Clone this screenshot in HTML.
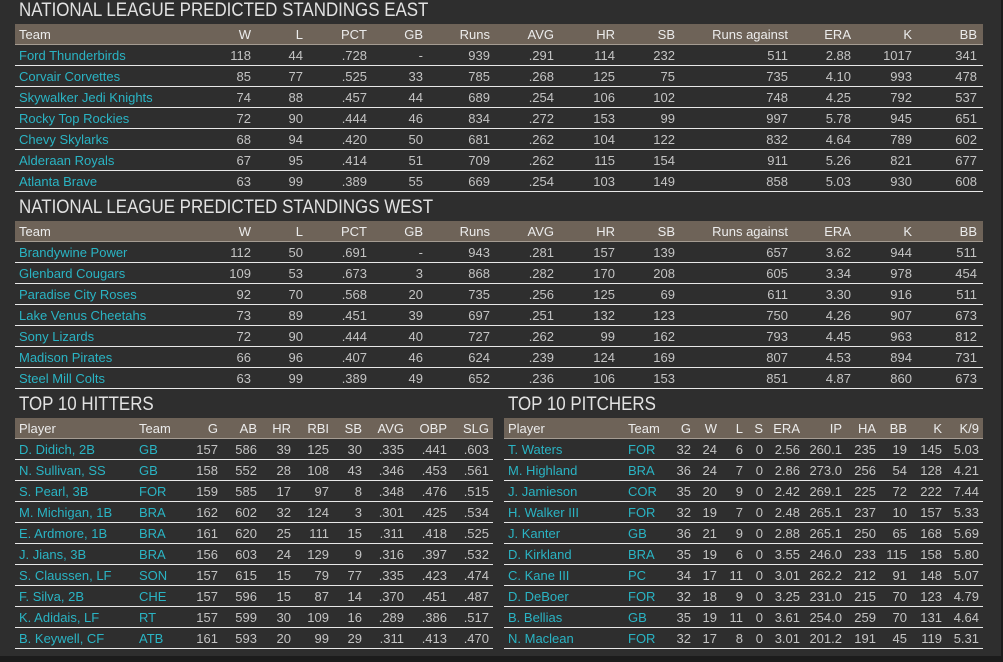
<!DOCTYPE html>
<html><head><meta charset="utf-8"><style>
body{margin:0;width:1003px;height:662px;background:#1c1c1c;font-family:"Liberation Sans",sans-serif;overflow:hidden;position:relative}
.panel{position:absolute;left:0;top:0;width:1001px;height:656px;background:#2e2e2e}
.t{position:absolute;color:#e2e2e2;font-size:19px;font-weight:normal;white-space:nowrap;transform:scaleX(0.89);transform-origin:0 0}
table{position:absolute;border-collapse:collapse;table-layout:fixed;font-size:13px}
td,th{height:20px;padding:0 4px 0 0;text-align:right;color:#c4c4c4;border-bottom:1px solid #e8e8e8;white-space:nowrap;overflow:visible;font-weight:normal}
th{background:#6e6358;color:#ececec;border-bottom:1px solid #a59c92}
td.n,th.n{text-align:left;padding-left:4px}
td.n{color:#2ab4c4}
td.c{color:#2ab4c4;text-align:left;padding-left:4px}
th.c{text-align:left;padding-left:4px}
</style></head><body><div class="panel"></div>
<div class="t" style="left:19px;top:0px">NATIONAL LEAGUE PREDICTED STANDINGS EAST</div>
<table style="left:15px;top:24px;width:968px">
<colgroup><col style="width:200px"><col style="width:40px"><col style="width:52px"><col style="width:64px"><col style="width:56px"><col style="width:67px"><col style="width:64px"><col style="width:61px"><col style="width:60px"><col style="width:113px"><col style="width:63px"><col style="width:61px"><col style="width:67px"></colgroup>
<tr><th class="n">Team</th><th>W</th><th>L</th><th>PCT</th><th>GB</th><th>Runs</th><th>AVG</th><th>HR</th><th>SB</th><th>Runs against</th><th>ERA</th><th>K</th><th style="padding-right:6px">BB</th></tr>
<tr><td class="n">Ford Thunderbirds</td><td>118</td><td>44</td><td>.728</td><td>-</td><td>939</td><td>.291</td><td>114</td><td>232</td><td>511</td><td>2.88</td><td>1017</td><td style="padding-right:6px">341</td></tr>
<tr><td class="n">Corvair Corvettes</td><td>85</td><td>77</td><td>.525</td><td>33</td><td>785</td><td>.268</td><td>125</td><td>75</td><td>735</td><td>4.10</td><td>993</td><td style="padding-right:6px">478</td></tr>
<tr><td class="n">Skywalker Jedi Knights</td><td>74</td><td>88</td><td>.457</td><td>44</td><td>689</td><td>.254</td><td>106</td><td>102</td><td>748</td><td>4.25</td><td>792</td><td style="padding-right:6px">537</td></tr>
<tr><td class="n">Rocky Top Rockies</td><td>72</td><td>90</td><td>.444</td><td>46</td><td>834</td><td>.272</td><td>153</td><td>99</td><td>997</td><td>5.78</td><td>945</td><td style="padding-right:6px">651</td></tr>
<tr><td class="n">Chevy Skylarks</td><td>68</td><td>94</td><td>.420</td><td>50</td><td>681</td><td>.262</td><td>104</td><td>122</td><td>832</td><td>4.64</td><td>789</td><td style="padding-right:6px">602</td></tr>
<tr><td class="n">Alderaan Royals</td><td>67</td><td>95</td><td>.414</td><td>51</td><td>709</td><td>.262</td><td>115</td><td>154</td><td>911</td><td>5.26</td><td>821</td><td style="padding-right:6px">677</td></tr>
<tr><td class="n">Atlanta Brave</td><td>63</td><td>99</td><td>.389</td><td>55</td><td>669</td><td>.254</td><td>103</td><td>149</td><td>858</td><td>5.03</td><td>930</td><td style="padding-right:6px">608</td></tr>
</table>
<div class="t" style="left:19px;top:197px">NATIONAL LEAGUE PREDICTED STANDINGS WEST</div>
<table style="left:15px;top:221px;width:968px">
<colgroup><col style="width:200px"><col style="width:40px"><col style="width:52px"><col style="width:64px"><col style="width:56px"><col style="width:67px"><col style="width:64px"><col style="width:61px"><col style="width:60px"><col style="width:113px"><col style="width:63px"><col style="width:61px"><col style="width:67px"></colgroup>
<tr><th class="n">Team</th><th>W</th><th>L</th><th>PCT</th><th>GB</th><th>Runs</th><th>AVG</th><th>HR</th><th>SB</th><th>Runs against</th><th>ERA</th><th>K</th><th style="padding-right:6px">BB</th></tr>
<tr><td class="n">Brandywine Power</td><td>112</td><td>50</td><td>.691</td><td>-</td><td>943</td><td>.281</td><td>157</td><td>139</td><td>657</td><td>3.62</td><td>944</td><td style="padding-right:6px">511</td></tr>
<tr><td class="n">Glenbard Cougars</td><td>109</td><td>53</td><td>.673</td><td>3</td><td>868</td><td>.282</td><td>170</td><td>208</td><td>605</td><td>3.34</td><td>978</td><td style="padding-right:6px">454</td></tr>
<tr><td class="n">Paradise City Roses</td><td>92</td><td>70</td><td>.568</td><td>20</td><td>735</td><td>.256</td><td>125</td><td>69</td><td>611</td><td>3.30</td><td>916</td><td style="padding-right:6px">511</td></tr>
<tr><td class="n">Lake Venus Cheetahs</td><td>73</td><td>89</td><td>.451</td><td>39</td><td>697</td><td>.251</td><td>132</td><td>123</td><td>750</td><td>4.26</td><td>907</td><td style="padding-right:6px">673</td></tr>
<tr><td class="n">Sony Lizards</td><td>72</td><td>90</td><td>.444</td><td>40</td><td>727</td><td>.262</td><td>99</td><td>162</td><td>793</td><td>4.45</td><td>963</td><td style="padding-right:6px">812</td></tr>
<tr><td class="n">Madison Pirates</td><td>66</td><td>96</td><td>.407</td><td>46</td><td>624</td><td>.239</td><td>124</td><td>169</td><td>807</td><td>4.53</td><td>894</td><td style="padding-right:6px">731</td></tr>
<tr><td class="n">Steel Mill Colts</td><td>63</td><td>99</td><td>.389</td><td>49</td><td>652</td><td>.236</td><td>106</td><td>153</td><td>851</td><td>4.87</td><td>860</td><td style="padding-right:6px">673</td></tr>
</table>
<div class="t" style="left:19px;top:394px">TOP 10 HITTERS</div>
<table style="left:15px;top:418px;width:478px">
<colgroup><col style="width:120px"><col style="width:45px"><col style="width:42px"><col style="width:39px"><col style="width:34px"><col style="width:38px"><col style="width:33px"><col style="width:42px"><col style="width:43px"><col style="width:42px"></colgroup>
<tr><th class="n">Player</th><th class="c">Team</th><th>G</th><th>AB</th><th>HR</th><th>RBI</th><th>SB</th><th>AVG</th><th>OBP</th><th>SLG</th></tr>
<tr><td class="n">D. Didich, 2B</td><td class="c">GB</td><td>157</td><td>586</td><td>39</td><td>125</td><td>30</td><td>.335</td><td>.441</td><td>.603</td></tr>
<tr><td class="n">N. Sullivan, SS</td><td class="c">GB</td><td>158</td><td>552</td><td>28</td><td>108</td><td>43</td><td>.346</td><td>.453</td><td>.561</td></tr>
<tr><td class="n">S. Pearl, 3B</td><td class="c">FOR</td><td>159</td><td>585</td><td>17</td><td>97</td><td>8</td><td>.348</td><td>.476</td><td>.515</td></tr>
<tr><td class="n">M. Michigan, 1B</td><td class="c">BRA</td><td>162</td><td>602</td><td>32</td><td>124</td><td>3</td><td>.301</td><td>.425</td><td>.534</td></tr>
<tr><td class="n">E. Ardmore, 1B</td><td class="c">BRA</td><td>161</td><td>620</td><td>25</td><td>111</td><td>15</td><td>.311</td><td>.418</td><td>.525</td></tr>
<tr><td class="n">J. Jians, 3B</td><td class="c">BRA</td><td>156</td><td>603</td><td>24</td><td>129</td><td>9</td><td>.316</td><td>.397</td><td>.532</td></tr>
<tr><td class="n">S. Claussen, LF</td><td class="c">SON</td><td>157</td><td>615</td><td>15</td><td>79</td><td>77</td><td>.335</td><td>.423</td><td>.474</td></tr>
<tr><td class="n">F. Silva, 2B</td><td class="c">CHE</td><td>157</td><td>596</td><td>15</td><td>87</td><td>14</td><td>.370</td><td>.451</td><td>.487</td></tr>
<tr><td class="n">K. Adidais, LF</td><td class="c">RT</td><td>157</td><td>599</td><td>30</td><td>109</td><td>16</td><td>.289</td><td>.386</td><td>.517</td></tr>
<tr><td class="n">B. Keywell, CF</td><td class="c">ATB</td><td>161</td><td>593</td><td>20</td><td>99</td><td>29</td><td>.311</td><td>.413</td><td>.470</td></tr>
</table>
<div class="t" style="left:508px;top:394px">TOP 10 PITCHERS</div>
<table style="left:504px;top:418px;width:479px">
<colgroup><col style="width:120px"><col style="width:43px"><col style="width:28px"><col style="width:26px"><col style="width:26px"><col style="width:20px"><col style="width:37px"><col style="width:42px"><col style="width:34px"><col style="width:31px"><col style="width:35px"><col style="width:37px"></colgroup>
<tr><th class="n">Player</th><th class="c">Team</th><th>G</th><th>W</th><th>L</th><th>S</th><th>ERA</th><th>IP</th><th>HA</th><th>BB</th><th>K</th><th>K/9</th></tr>
<tr><td class="n">T. Waters</td><td class="c">FOR</td><td>32</td><td>24</td><td>6</td><td>0</td><td>2.56</td><td>260.1</td><td>235</td><td>19</td><td>145</td><td>5.03</td></tr>
<tr><td class="n">M. Highland</td><td class="c">BRA</td><td>36</td><td>24</td><td>7</td><td>0</td><td>2.86</td><td>273.0</td><td>256</td><td>54</td><td>128</td><td>4.21</td></tr>
<tr><td class="n">J. Jamieson</td><td class="c">COR</td><td>35</td><td>20</td><td>9</td><td>0</td><td>2.42</td><td>269.1</td><td>225</td><td>72</td><td>222</td><td>7.44</td></tr>
<tr><td class="n">H. Walker III</td><td class="c">FOR</td><td>32</td><td>19</td><td>7</td><td>0</td><td>2.48</td><td>265.1</td><td>237</td><td>10</td><td>157</td><td>5.33</td></tr>
<tr><td class="n">J. Kanter</td><td class="c">GB</td><td>36</td><td>21</td><td>9</td><td>0</td><td>2.88</td><td>265.1</td><td>250</td><td>65</td><td>168</td><td>5.69</td></tr>
<tr><td class="n">D. Kirkland</td><td class="c">BRA</td><td>35</td><td>19</td><td>6</td><td>0</td><td>3.55</td><td>246.0</td><td>233</td><td>115</td><td>158</td><td>5.80</td></tr>
<tr><td class="n">C. Kane III</td><td class="c">PC</td><td>34</td><td>17</td><td>11</td><td>0</td><td>3.01</td><td>262.2</td><td>212</td><td>91</td><td>148</td><td>5.07</td></tr>
<tr><td class="n">D. DeBoer</td><td class="c">FOR</td><td>32</td><td>18</td><td>9</td><td>0</td><td>3.25</td><td>231.0</td><td>215</td><td>70</td><td>123</td><td>4.79</td></tr>
<tr><td class="n">B. Bellias</td><td class="c">GB</td><td>35</td><td>19</td><td>11</td><td>0</td><td>3.61</td><td>254.0</td><td>259</td><td>70</td><td>131</td><td>4.64</td></tr>
<tr><td class="n">N. Maclean</td><td class="c">FOR</td><td>32</td><td>17</td><td>8</td><td>0</td><td>3.01</td><td>201.2</td><td>191</td><td>45</td><td>119</td><td>5.31</td></tr>
</table>
</body></html>
